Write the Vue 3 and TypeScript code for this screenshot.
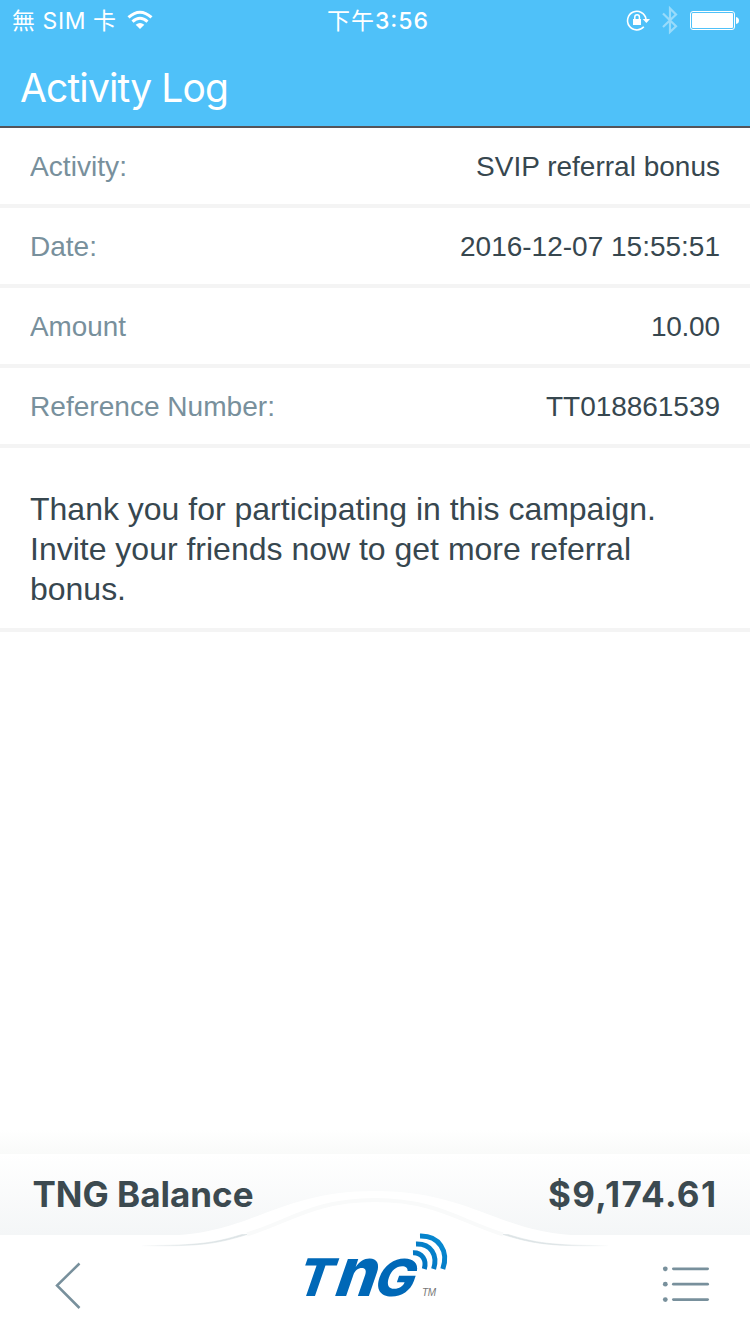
<script setup lang="ts">
interface LogRow {
  label: string
  value: string
  width: number
  valueWidth: number
}

const rows: LogRow[] = [
  { label: 'Activity:', value: 'SVIP referral bonus', width: 97, valueWidth: 244 },
  { label: 'Date:', value: '2016-12-07 15:55:51', width: 67, valueWidth: 260 },
  { label: 'Amount', value: '10.00', width: 96, valueWidth: 69 },
  { label: 'Reference Number:', value: 'TT018861539', width: 245, valueWidth: 174 },
]

const message = [
  { text: 'Thank you for participating in this campaign.', width: 626 },
  { text: 'Invite your friends now to get more referral', width: 601 },
  { text: 'bonus.', width: 96 },
]
</script>

<template>
  <div class="screen">
    <header class="header">
      <div class="status">
        <div class="carrier">
          <svg class="carrier-text" width="105" height="40"><text x="0" y="29" textLength="104">無 SIM 卡</text></svg>
          <svg class="wifi" width="26" height="20" viewBox="0 0 26 20" fill="none" stroke="#fff" stroke-width="3">
            <path d="M1.5 7.4 Q13 -3 24.5 7.4" />
            <path d="M5.5 11.6 Q13 5 20.5 11.6" />
            <path d="M13 19 L8.7 14.7 Q13 11.2 17.3 14.7Z" fill="#fff" stroke="none" />
          </svg>
        </div>
        <svg class="clock" width="104" height="40"><text x="0" y="29" textLength="101"><tspan class="period">下午</tspan>3:56</text></svg>
        <svg class="indicators" width="126" height="40" viewBox="624 0 126 40">
          <path d="M643.8 26.8 A9.3 9.3 0 1 1 646 19" fill="none" stroke="#fff" stroke-width="1.6" />
          <path d="M642.7 19 H650 L646.4 22.9Z" fill="#fff" />
          <rect x="633" y="19" width="8" height="6" fill="#fff" />
          <path d="M634.8 19.5 V17 a2.3 2.3 0 0 1 4.6 0 V19.5" fill="none" stroke="#fff" stroke-width="1.5" />
          <path d="M663 13.5 L676 26.2 L670 32 V8.5 L676 14.5 L663 27" fill="none" stroke="#98dbfb" stroke-width="2.2" />
          <rect x="690.5" y="11.5" width="44" height="18" rx="2.5" fill="none" stroke="#fff" />
          <rect x="692" y="13" width="41" height="15" rx="1" fill="#fff" />
          <path d="M736 17 q3 .5 3 3.5 t-3 3.5Z" fill="#fff" />
        </svg>
      </div>
      <svg class="title" width="240" height="84"><text x="20" y="62" textLength="209">Activity Log</text></svg>
    </header>

    <main class="content">
      <div v-for="row in rows" :key="row.label" class="row">
        <svg class="label" width="260" height="76"><text x="0" y="48" :textLength="row.width" lengthAdjust="spacingAndGlyphs">{{ row.label }}</text></svg>
        <svg class="value" width="280" height="76"><text x="280" y="48" text-anchor="end" :textLength="row.valueWidth">{{ row.value }}</text></svg>
      </div>
      <div class="message">
        <svg v-for="line in message" :key="line.text" width="690" height="40">
          <text x="0" y="30" :textLength="line.width">{{ line.text }}</text>
        </svg>
      </div>
    </main>

    <footer class="footer">
      <div class="fade"></div>
      <div class="balance">
        <svg width="240" height="80"><text x="-0.5" y="53" textLength="221">TNG Balance</text></svg>
        <svg width="180" height="80"><text x="179" y="53" text-anchor="end" textLength="168">$9,174.61</text></svg>
        <svg class="wave" width="480" height="72" viewBox="135 1180 480 72">
          <defs>
            <linearGradient id="edge" x1="140" x2="610" gradientUnits="userSpaceOnUse">
              <stop offset="0" stop-color="#dce3e5" stop-opacity="0" />
              <stop offset=".12" stop-color="#dce3e5" />
              <stop offset=".88" stop-color="#dce3e5" />
              <stop offset="1" stop-color="#dce3e5" stop-opacity="0" />
            </linearGradient>
          </defs>
          <path d="M165 1235.5 C250 1235 277 1191 375 1191 C473 1191 500 1235 585 1235.5 V1252 H165Z" fill="#fff" />
          <path d="M247 1234.5 C290 1221 315 1200 375 1200 C435 1200 460 1221 503 1234.5" fill="none" stroke="#f9fafa" stroke-width="4" />
          <path d="M142 1246 C200 1246 214 1244.5 247 1234.5 L242 1234.5 C214 1243 200 1245.5 142 1245.5Z M608 1246 C550 1246 536 1244.5 503 1234.5 L508 1234.5 C536 1243 550 1245.5 608 1245.5Z" fill="url(#edge)" stroke="url(#edge)" stroke-width=".6" />
        </svg>
      </div>
      <nav class="nav">
        <svg class="back" width="28" height="50" viewBox="54 1260 28 50" fill="none" stroke="#78909c" stroke-width="2.5">
          <path d="M79.5 1263.5 L57 1285.5 L79.5 1308" />
        </svg>
        <svg class="logo" width="150" height="70" viewBox="300 1230 150 70">
          <defs>
            <linearGradient id="brand" x1="405" y1="1270" x2="440" y2="1235" gradientUnits="userSpaceOnUse">
              <stop stop-color="#006bb9" /><stop offset="1" stop-color="#088bd2" />
            </linearGradient>
          </defs>
          <g class="brand" transform="translate(300 1296) skewX(-19)">
            <text x="-7" y="0" font-size="52" textLength="35" lengthAdjust="spacingAndGlyphs">T</text>
            <text x="31.5" y="0" font-size="68" textLength="41" lengthAdjust="spacingAndGlyphs">n</text>
            <text x="71" y="0" font-size="51" textLength="40" lengthAdjust="spacingAndGlyphs">G</text>
          </g>
          <g fill="none" stroke="url(#brand)" stroke-width="5">
            <path d="M413 1252.8 C422 1252.5 427 1260 424.3 1269" />
            <path d="M416 1244 C431 1243.5 438 1255 433.6 1269" />
            <path d="M420 1236 C439 1235.5 449 1251 442.8 1269" />
          </g>
          <text class="tm" x="422" y="1296" textLength="14">TM</text>
        </svg>
        <svg class="menu" width="50" height="40" viewBox="661 1265 50 40" fill="#78909c">
          <g v-for="n in 3" :key="n">
            <circle cx="665.3" :cy="1253.4 + n * 15.4" r="2.4" />
            <rect x="672" :y="1252 + n * 15.4" width="37" height="2.8" rx="1.4" />
          </g>
        </svg>
      </nav>
    </footer>
  </div>
</template>

<style>
body { background: #fff; }
</style>

<style scoped>
.screen { width: 750px; height: 1334px; display: flex; flex-direction: column; overflow: hidden; background: #fff; font-family: "Liberation Sans", "Noto Sans CJK TC", sans-serif; font-optical-sizing: none; }
svg { display: block; flex: none; }
.header { height: 126px; background: #4fc1f9; border-bottom: 2px solid #555459; flex: none; }
.status { height: 40px; display: flex; justify-content: space-between; }
.carrier { width: 327px; display: flex; padding-left: 12px; box-sizing: border-box; }
.carrier-text, .clock { fill: #fff; font-family: Inter, "Noto Sans CJK TC", sans-serif; font-size: 23px; }
.carrier-text { font-weight: 400; }
.clock { font-weight: 500; margin-right: 193px; }
.period { font-weight: 400; }
.wifi { margin: 10px 0 0 10px; }
.title { fill: #fff; font-family: Inter, sans-serif; font-size: 39px; font-weight: 400; }
.content { flex: 1; }
.row { height: 76px; padding: 0 30px; border-bottom: 4px solid #f4f4f4; display: flex; justify-content: space-between; font-size: 28px; }
.label { fill: #78909c; }
.value { fill: #37474f; }
.message { height: 138px; padding: 42px 30px 0; border-bottom: 4px solid #f4f4f4; fill: #37474f; font-size: 32px; }
.footer { flex: none; height: 204px; }
.fade { height: 24px; background: linear-gradient(#fff, #f9faf9); }
.balance { height: 81px; position: relative; padding: 0 33px; display: flex; justify-content: space-between; background: linear-gradient(#fff, #f4f6f7); fill: #3c4a50; font-family: Inter, sans-serif; font-weight: 700; font-size: 35px; }
.wave { position: absolute; left: 135px; top: 26px; }
.nav { height: 99px; display: flex; align-items: flex-start; padding: 0 39px 0 54px; }
.back { margin-top: 25px; }
.logo { position: relative; margin: -5px 0 0 218px; overflow: visible; }
.brand { fill: #0068b7; font-family: Inter, sans-serif; font-weight: 800; }
.tm { fill: #777; font: italic 10px "Liberation Sans", sans-serif; }
.menu { margin: 30px 0 0 auto; }
</style>
